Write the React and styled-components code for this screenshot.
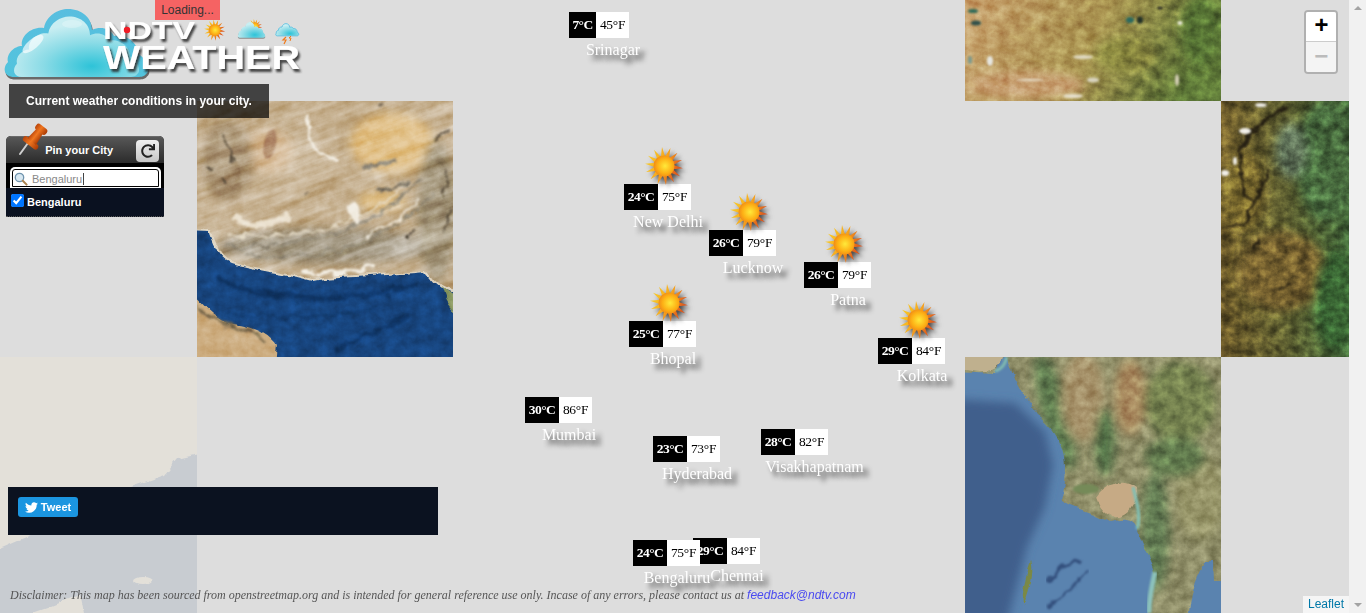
import React from 'react'
import styled, { createGlobalStyle } from 'styled-components'
import { FaTwitter, FaRedo } from 'react-icons/fa'

const GlobalStyle = createGlobalStyle`
  html, body {
    margin: 0;
    padding: 0;
    height: 100%;
    overflow: hidden;
  }

  #root {
    height: 100%;
  }
`

const Page = styled.div`
  display: flex;
  width: 100%;
  height: 613px;
  font-family: "Liberation Sans", Arial, sans-serif;
`

const MapArea = styled.main`
  position: relative;
  flex: 1;
  overflow: hidden;
  background-color: #dddddd;
`

const ScrollTrack = styled.div`
  width: 17px;
  display: flex;
  flex-direction: column;
  align-items: center;
  justify-content: space-between;
  padding: 6px 0;
  box-sizing: border-box;
  background-color: #f1f1f1;
`

const ScrollArrow = styled.span`
  width: 0;
  height: 0;
  border-left: 4px solid transparent;
  border-right: 4px solid transparent;
  border-bottom: ${({ $down }) => ($down ? 'none' : '4px solid #a3a3a3')};
  border-top: ${({ $down }) => ($down ? '4px solid #a3a3a3' : 'none')};
`

const TileBox = styled.svg`
  position: absolute;
  display: block;
  left: ${({ $x }) => $x}px;
  top: ${({ $y }) => $y}px;
  opacity: ${({ $fade }) => $fade || 1};
`

const HiddenDefs = styled.svg`
  position: absolute;
  width: 0;
  height: 0;
`

const Marker = styled.div`
  position: absolute;
  left: ${({ $x }) => $x}px;
  top: ${({ $y }) => $y}px;
  width: 88px;
  display: flex;
  flex-direction: column;
  align-items: center;
  font-family: "Liberation Serif", "Times New Roman", serif;
`

const SunSpot = styled.svg`
  position: absolute;
  left: 21px;
  top: -37px;
  width: 38px;
  height: 38px;
  filter: drop-shadow(3px 3px 2px rgba(30, 30, 30, 0.75));
`

const TempRow = styled.div`
  align-self: flex-start;
  display: flex;
  height: 26px;
  font-size: 13.5px;
  line-height: 26px;
  white-space: nowrap;
`

const TempC = styled.span`
  width: ${({ $narrow }) => ($narrow ? 27 : 34)}px;
  text-align: center;
  font-weight: 700;
  letter-spacing: -0.6px;
  color: #ffffff;
  background-color: #000000;
`

const TempF = styled.span`
  width: 33px;
  text-align: center;
  letter-spacing: -0.3px;
  color: #000000;
  background-color: #ffffff;
`

const CityName = styled.div`
  margin-top: 3px;
  margin-left: ${({ $nudge }) => $nudge || 0}px;
  font-size: 16px;
  line-height: 18px;
  white-space: nowrap;
  color: #ffffff;
  text-shadow: 5px 5px 5px #333333;
`

const ZoomControl = styled.div`
  position: absolute;
  top: 10px;
  right: 11px;
  display: flex;
  flex-direction: column;
  border: 2px solid rgba(0, 0, 0, 0.2);
  border-radius: 4px;
  background-clip: padding-box;
`

const ZoomButton = styled.a`
  width: 30px;
  height: 30px;
  padding-left: 1px;
  box-sizing: border-box;
  display: flex;
  align-items: center;
  justify-content: center;
  font-family: "Liberation Mono", monospace;
  font-size: 24px;
  font-weight: 700;
  color: ${({ $disabled }) => ($disabled ? '#bbbbbb' : '#000000')};
  background-color: ${({ $disabled }) => ($disabled ? '#f4f4f4' : '#ffffff')};
  border-bottom: ${({ $disabled }) => ($disabled ? 'none' : '1px solid #cccccc')};
  border-radius: ${({ $disabled }) => ($disabled ? '0 0 2px 2px' : '2px 2px 0 0')};
`

const Attribution = styled.div`
  position: absolute;
  right: 0;
  bottom: 0;
  padding: 0 5px;
  font-size: 12px;
  line-height: 17px;
  background-color: rgba(255, 255, 255, 0.7);

  a {
    color: #0078a8;
  }
`

const Overlay = styled.div`
  position: absolute;
  top: 0;
  left: 0;
  bottom: 0;
  display: flex;
  flex-direction: column;
  align-items: flex-start;
`

const Loading = styled.div`
  position: absolute;
  top: 0;
  left: 155px;
  width: 65px;
  height: 20px;
  font-size: 12px;
  line-height: 20px;
  text-align: center;
  color: #333333;
  background-color: #f56363;
`

const LogoArt = styled.svg`
  display: block;
  flex: none;
`

const TitleBar = styled.h1`
  width: 260px;
  height: 34px;
  margin: 0 0 18px 9px;
  font-size: 12px;
  font-weight: 700;
  line-height: 34px;
  text-align: center;
  color: #ffffff;
  background-color: rgba(0, 0, 0, 0.7);
`

const PinPanel = styled.section`
  position: relative;
  width: 158px;
  margin-left: 6px;
  background-color: #000000;
  border-radius: 5px 5px 0 0;
`

const PinHead = styled.header`
  height: 26px;
  display: flex;
  align-items: center;
  justify-content: flex-end;
  gap: 23px;
  padding-right: 5px;
  font-size: 11px;
  font-weight: 700;
  color: #ffffff;
  border-radius: 5px 5px 0 0;
  border-top: 1px solid #6a6a6a;
  background: linear-gradient(#575757, #2b2b2b);
`

const PinArt = styled.svg`
  position: absolute;
  left: 6px;
  top: -14px;
`

const RefreshButton = styled.button`
  width: 23px;
  height: 22px;
  margin-top: 2px;
  padding: 0;
  display: flex;
  align-items: center;
  justify-content: center;
  color: #222222;
  border: none;
  border-radius: 4px;
  background: linear-gradient(#f0f0f0, #c6c6c6);
`

const SearchWrap = styled.div`
  padding: 5px 4px 0 5px;
`

const SearchField = styled.div`
  height: 19px;
  display: flex;
  align-items: center;
  gap: 4px;
  padding-left: 2px;
  font-size: 11px;
  color: #888888;
  background-color: #ffffff;
  border: 1px solid #ffffff;
  border-bottom: none;
  border-radius: 4px 4px 0 0;
  outline: 1px solid #000000;
  outline-offset: -2px;
  box-shadow: 0 0 0 1px #ffffff;
`

const SearchText = styled.span`
  padding-right: 1px;
  border-right: 1px solid #444444;
`

const CityList = styled.ul`
  margin: 0;
  padding: 6px 0 0 5px;
  height: 22px;
  list-style: none;
  background-color: #0a1120;
  border-bottom: 1px dotted #555555;
`

const CityItem = styled.li`
  display: flex;
  align-items: flex-start;
  gap: 3px;
  font-size: 11px;
  font-weight: 700;
  line-height: 17px;
  color: #ffffff;

  input {
    width: 13px;
    height: 13px;
    margin: 0;
  }
`

const TweetBar = styled.div`
  width: 410px;
  height: 28px;
  margin: auto 0 0 8px;
  padding: 10px;
  background-color: #0b1220;
`

const TweetButton = styled.a`
  width: 60px;
  height: 20px;
  display: flex;
  align-items: center;
  justify-content: center;
  gap: 3px;
  font-size: 11px;
  font-weight: 700;
  color: #ffffff;
  border-radius: 3px;
  background-color: #1b95e0;
`

const Disclaimer = styled.p`
  margin: 52px 0 10px 10px;
  font-family: "Liberation Serif", "Times New Roman", serif;
  font-size: 12px;
  font-style: italic;
  line-height: 16px;
  white-space: nowrap;
  color: #555555;

  a {
    font-family: "Liberation Sans", Arial, sans-serif;
    color: #4a4af0;
  }
`

const cities = [
  { name: 'Srinagar', x: 569, y: 12, c: '7', f: '45', narrow: true },
  { name: 'New Delhi', x: 624, y: 184, c: '24', f: '75', sun: true },
  { name: 'Lucknow', x: 709, y: 230, c: '26', f: '79', sun: true },
  { name: 'Patna', x: 804, y: 262, c: '26', f: '79', sun: true },
  { name: 'Bhopal', x: 629, y: 321, c: '25', f: '77', sun: true },
  { name: 'Kolkata', x: 878, y: 338, c: '29', f: '84', sun: true },
  { name: 'Mumbai', x: 525, y: 397, c: '30', f: '86' },
  { name: 'Hyderabad', x: 653, y: 436, c: '23', f: '73' },
  { name: 'Visakhapatnam', x: 761, y: 429, c: '28', f: '82', nudge: 19 },
  { name: 'Chennai', x: 693, y: 538, c: '29', f: '84' },
  { name: 'Bengaluru', x: 633, y: 540, c: '24', f: '75' },
]

const sunSpikes = Array.from({ length: 28 }, (_, i) => {
  const r = i % 2 === 0 ? 19 : 9.5
  const a = (i * Math.PI) / 14 + 0.12
  return `${(19 + r * Math.cos(a)).toFixed(1)},${(19 + r * Math.sin(a)).toFixed(1)}`
}).join(' ')

const cloudPath =
  'M14 77C4 77 2 68 8 62C6 54 14 46 22 46C20 36 32 26 44 28C46 16 58 9 68 9C82 9 92 18 92 30C100 26 110 28 114 36C126 34 138 42 138 54C146 58 152 70 146 74C144 77 140 77 136 77Z'

const NoiseGrade = () => (
  <>
    <feColorMatrix type="saturate" values="0" />
    <feComponentTransfer>
      <feFuncR type="linear" slope="1.7" intercept="-0.35" />
      <feFuncG type="linear" slope="1.7" intercept="-0.35" />
      <feFuncB type="linear" slope="1.7" intercept="-0.35" />
      <feFuncA type="linear" slope="0" intercept="1" />
    </feComponentTransfer>
  </>
)

// shared gradients and map textures
const SharedDefs = () => (
  <HiddenDefs aria-hidden="true">
    <defs>
      <radialGradient id="sunCore" cx="55%" cy="50%" r="55%">
        <stop offset="0%" stopColor="#ffe93a" />
        <stop offset="65%" stopColor="#fdb015" />
        <stop offset="100%" stopColor="#f08a17" />
      </radialGradient>
      <linearGradient id="sunRays" x1="0" y1="0" x2="1" y2="0.4">
        <stop offset="0%" stopColor="#f8d92b" />
        <stop offset="55%" stopColor="#f6a71e" />
        <stop offset="100%" stopColor="#dd531c" />
      </linearGradient>
      <linearGradient id="cloudRim" x1="0" y1="0" x2="0" y2="1">
        <stop offset="0%" stopColor="#58bedf" />
        <stop offset="100%" stopColor="#52c4dd" />
      </linearGradient>
      <radialGradient id="cloudBody" cx="62%" cy="82%" r="70%">
        <stop offset="0%" stopColor="#2ec3d8" />
        <stop offset="55%" stopColor="#8adbe6" />
        <stop offset="100%" stopColor="#c9eef2" />
      </radialGradient>
      <filter id="rough" x="-5%" y="-5%" width="110%" height="110%" colorInterpolationFilters="sRGB">
        <feTurbulence type="fractalNoise" baseFrequency="0.05" numOctaves="4" seed="7" result="n" />
        <feDisplacementMap in="SourceGraphic" in2="n" scale="8" xChannelSelector="R" yChannelSelector="G" />
        <feGaussianBlur stdDeviation="0.6" />
      </filter>
      <filter id="roughSoft" x="-10%" y="-10%" width="120%" height="120%" colorInterpolationFilters="sRGB">
        <feTurbulence type="fractalNoise" baseFrequency="0.08" numOctaves="4" seed="21" result="n" />
        <feDisplacementMap in="SourceGraphic" in2="n" scale="12" xChannelSelector="R" yChannelSelector="G" />
        <feGaussianBlur stdDeviation="0.9" />
      </filter>
      <filter id="grain" x="0" y="0" width="100%" height="100%" colorInterpolationFilters="sRGB">
        <feTurbulence type="fractalNoise" baseFrequency="0.09" numOctaves="5" seed="3" />
        <NoiseGrade />
      </filter>
      <filter id="bands" x="0" y="0" width="100%" height="100%" colorInterpolationFilters="sRGB">
        <feTurbulence type="fractalNoise" baseFrequency="0.012 0.1" numOctaves="4" seed="11" />
        <NoiseGrade />
      </filter>
      <filter id="soft" x="-30%" y="-30%" width="160%" height="160%">
        <feGaussianBlur stdDeviation="5" />
      </filter>
      <filter id="softer" x="-30%" y="-30%" width="160%" height="160%">
        <feGaussianBlur stdDeviation="1.2" />
      </filter>
      <linearGradient id="plateau" x1="0" y1="0" x2="1" y2="0.2">
        <stop offset="0%" stopColor="#c9a06c" />
        <stop offset="55%" stopColor="#a8924f" />
        <stop offset="100%" stopColor="#5f7a38" />
      </linearGradient>
      <linearGradient id="ranges" x1="0" y1="0" x2="1" y2="0">
        <stop offset="0%" stopColor="#6f5c2a" />
        <stop offset="50%" stopColor="#5e5f30" />
        <stop offset="100%" stopColor="#3e6136" />
      </linearGradient>
    </defs>
  </HiddenDefs>
)

const Noise = ({ w, h, kind = 'grain', amount = 0.5, angle = 0 }) => (
  <g transform={`rotate(${angle} ${w / 2} ${h / 2})`}>
    <rect
      x={-w / 2}
      y={-h / 2}
      width={w * 2}
      height={h * 2}
      filter={`url(#${kind})`}
      opacity={amount}
      style={{ mixBlendMode: 'overlay' }}
    />
  </g>
)

// Makran coast and the Arabian Sea
const ArabianTile = () => (
  <TileBox $x={197} $y={101} width="256" height="256" viewBox="0 0 256 256">
    <rect width="256" height="256" fill="#c6b08f" />
    <g filter="url(#soft)">
      <ellipse cx="195" cy="42" rx="42" ry="30" fill="#e3c38c" />
      <ellipse cx="185" cy="100" rx="24" ry="10" fill="#e0bf85" />
      <ellipse cx="72" cy="50" rx="24" ry="22" fill="#d6b994" />
      <ellipse cx="30" cy="60" rx="26" ry="40" fill="#ab9576" />
      <ellipse cx="130" cy="145" rx="110" ry="18" fill="#a59a84" />
      <ellipse cx="240" cy="110" rx="20" ry="70" fill="#a3957a" />
    </g>
    <ellipse cx="73" cy="43" rx="6" ry="15" fill="#b0896b" filter="url(#softer)" transform="rotate(12 73 43)" />
    <Noise w={256} h={256} kind="bands" amount={0.4} angle={-20} />
    <g fill="none" strokeLinecap="round" filter="url(#roughSoft)">
      <path d="M112 15C108 40 120 60 140 58" stroke="#f4efe4" strokeWidth="3" />
      <path d="M40 118C60 128 78 122 88 116" stroke="#ece2d0" strokeWidth="8" />
      <path d="M30 145C90 150 180 130 225 78" stroke="#8f8776" strokeWidth="2" />
      <path d="M30 133C90 138 160 130 205 88" stroke="#e6dcc8" strokeWidth="2" />
      <path d="M50 155C110 160 190 150 236 90" stroke="#928a78" strokeWidth="2" />
      <path d="M170 135C190 128 205 118 220 100" stroke="#efe9dc" strokeWidth="2" />
      <path d="M165 70C175 62 190 62 198 60" stroke="#8a8375" strokeWidth="4" />
      <path d="M180 92C190 86 200 84 212 82" stroke="#6f695d" strokeWidth="3" />
      <path d="M155 108L160 118" stroke="#f2ede2" strokeWidth="9" />
      <path d="M105 168C120 178 150 172 175 166" stroke="#f3eee3" strokeWidth="4" />
      <g stroke="#3a3024" strokeWidth="1.5">
        <path d="M28 35L36 60" />
        <path d="M10 68L14 70" />
        <path d="M26 78L32 80" />
        <path d="M110 90L113 90" />
        <path d="M250 70L246 95" />
        <path d="M252 110L248 130" />
        <path d="M236 40L248 28" />
        <path d="M182 8L188 3" />
        <path d="M218 128L210 138" />
      </g>
    </g>
    <g filter="url(#rough)">
      <path
        d="M-10 127L14 128C18 140 22 154 34 160C60 168 90 170 116 178C135 174 175 174 230 170C238 178 240 186 258 190L262 266L-10 266Z"
        fill="#ddd3c0"
      />
      <path
        d="M-10 129L12 130C16 143 22 157 34 162C60 170 90 172 116 180C135 176 175 176 228 171C236 179 238 189 262 195L262 266L-10 266Z"
        fill="#17457f"
      />
      <path d="M244 186C250 192 256 196 262 198L258 212C250 206 246 196 244 186Z" fill="#8e9c66" />
      <path d="M-10 190C4 200 12 215 30 222C50 225 68 228 80 245L78 266L-10 266Z" fill="#cdad80" />
    </g>
    <g fill="none" stroke="#0f3566" strokeLinecap="round" filter="url(#roughSoft)">
      <path d="M20 178C70 200 150 205 220 182" strokeWidth="6" />
      <path d="M140 250C160 235 190 230 210 215" strokeWidth="5" />
      <path d="M30 212C90 220 150 215 180 205" strokeWidth="3" opacity="0.6" />
    </g>
    <path d="M0 205C10 225 40 220 70 240" stroke="#7a6a4c" strokeWidth="3" fill="none" filter="url(#roughSoft)" />
    <Noise w={256} h={256} amount={0.2} />
  </TileBox>
)

const TibetTile = () => (
  <TileBox $x={965} $y={0} width="256" height="101" viewBox="0 0 256 101">
    <rect width="256" height="101" fill="url(#plateau)" />
    <g filter="url(#soft)">
      <ellipse cx="60" cy="85" rx="60" ry="14" fill="#c79f70" />
      <ellipse cx="160" cy="55" rx="30" ry="18" fill="#86843e" />
      <ellipse cx="236" cy="30" rx="20" ry="35" fill="#587636" />
    </g>
    <Noise w={256} h={101} kind="bands" amount={0.15} angle={15} />
    <Noise w={256} h={101} amount={0.35} />
    <g filter="url(#softer)">
      <ellipse cx="8" cy="11" rx="5" ry="2" fill="#2f6a58" />
      <ellipse cx="11" cy="23" rx="5" ry="2.5" fill="#2f4f48" />
      <ellipse cx="165" cy="20" rx="4" ry="3" fill="#2c6a5e" />
      <ellipse cx="175" cy="20" rx="3" ry="3.5" fill="#223328" />
      <ellipse cx="25" cy="61" rx="3" ry="5" fill="#e6e6e0" />
      <ellipse cx="5" cy="60" rx="2" ry="4" fill="#7a9a90" />
      <ellipse cx="195" cy="8" rx="3" ry="1.5" fill="#2a2a20" />
      <ellipse cx="215" cy="23" rx="2.5" ry="2" fill="#e8e6da" />
      <ellipse cx="108" cy="96" rx="10" ry="2" fill="#e6dfcc" />
      <ellipse cx="118" cy="57" rx="10" ry="2" fill="#dfd8c0" />
      <ellipse cx="128" cy="80" rx="6" ry="2.5" fill="#d9d4c0" />
      <ellipse cx="65" cy="80" rx="14" ry="1.2" fill="#e4dac4" />
      <ellipse cx="212" cy="80" rx="2" ry="6" fill="#d4cfb5" />
    </g>
  </TileBox>
)

const RangesTile = () => (
  <TileBox $x={1221} $y={101} width="128" height="256" viewBox="0 0 128 256">
    <rect width="128" height="256" fill="url(#ranges)" />
    <g filter="url(#soft)">
      <ellipse cx="22" cy="90" rx="22" ry="40" fill="#7d6c2e" />
      <ellipse cx="60" cy="170" rx="45" ry="40" fill="#75602f" />
      <ellipse cx="105" cy="60" rx="30" ry="60" fill="#466a3c" />
      <ellipse cx="115" cy="200" rx="22" ry="50" fill="#376333" />
      <ellipse cx="70" cy="50" rx="16" ry="28" fill="#5e7258" />
    </g>
    <Noise w={128} h={256} amount={0.35} />
    <g fill="none" stroke="#241e12" strokeLinecap="round" filter="url(#roughSoft)">
      <path d="M64 8C50 18 30 24 18 50" strokeWidth="3" />
      <path d="M48 20C38 28 30 34 22 46" strokeWidth="2" />
      <path d="M18 50C20 70 18 90 30 100" strokeWidth="3" />
      <path d="M48 70C40 90 30 100 24 122" strokeWidth="3" />
      <path d="M0 128C14 125 24 122 34 112" strokeWidth="2" />
      <path d="M38 138L34 150" strokeWidth="3" />
      <path d="M50 190L70 185" strokeWidth="1.5" />
      <path d="M0 195C20 225 40 235 60 250" strokeWidth="1.2" opacity="0.6" />
    </g>
    <g fill="#f2f0ea" filter="url(#softer)">
      <ellipse cx="24" cy="30" rx="6" ry="3" />
      <ellipse cx="14" cy="60" rx="2" ry="4" />
      <ellipse cx="4" cy="72" rx="4" ry="3" />
      <ellipse cx="40" cy="4" rx="6" ry="2" />
    </g>
    <Noise w={128} h={256} amount={0.2} />
  </TileBox>
)

// Myanmar and the Andaman Sea
const MyanmarTile = () => (
  <TileBox $x={965} $y={357} width="256" height="256" viewBox="0 0 256 256">
    <rect width="256" height="256" fill="#8f8e68" />
    <g filter="url(#soft)">
      <ellipse cx="90" cy="55" rx="14" ry="60" fill="#5f7c50" transform="rotate(-15 90 55)" />
      <ellipse cx="118" cy="40" rx="22" ry="45" fill="#a8946c" />
      <ellipse cx="140" cy="85" rx="10" ry="35" fill="#547548" />
      <ellipse cx="165" cy="40" rx="16" ry="38" fill="#a98a5e" />
      <ellipse cx="215" cy="45" rx="36" ry="40" fill="#74824f" />
      <ellipse cx="190" cy="175" rx="14" ry="60" fill="#657f54" />
      <ellipse cx="235" cy="140" rx="24" ry="42" fill="#969468" />
      <ellipse cx="210" cy="100" rx="30" ry="20" fill="#647d50" />
    </g>
    <Noise w={256} h={256} amount={0.3} />
    <ellipse cx="121" cy="132" rx="13" ry="5" fill="#748a58" filter="url(#softer)" />
    <g filter="url(#rough)">
      <path
        d="M-10 14L30 16L42 -6L42 0C50 25 60 40 72 58C90 70 100 90 100 110C100 125 96 135 98 144C110 152 128 155 145 165C155 162 168 160 172 172C178 190 188 205 190 215C188 232 184 245 182 266L225 266C222 250 226 232 240 206L248 206L249 222L266 222L266 266L-10 266Z"
        fill="#5a83af"
      />
      <path d="M-10 -6L38 -6C40 6 32 14 20 14C10 14 0 12 -10 10Z" fill="#bfb08e" />
      <path d="M130 140C140 125 160 120 172 130C172 150 160 162 148 160C140 158 134 152 130 140Z" fill="#c6aa85" />
      <path d="M66 205C70 215 64 235 58 250C56 235 62 215 66 205Z" fill="#7c8a45" />
    </g>
    <path d="M-10 42L50 46L80 75L88 108L80 150L62 190L42 266L-10 266Z" fill="#405f8c" filter="url(#soft)" />
    <g fill="none" stroke="#334f7c" strokeLinecap="round" filter="url(#roughSoft)">
      <path d="M85 225C95 210 105 200 115 205" strokeWidth="4" />
      <path d="M85 250C100 235 110 230 120 215" strokeWidth="3" />
    </g>
    <path d="M168 130C172 145 176 160 172 172" stroke="#7fc0b5" strokeWidth="3" fill="none" filter="url(#softer)" />
    <path d="M190 215C186 232 184 245 184 256" stroke="#8cc2bb" strokeWidth="5" fill="none" filter="url(#softer)" />
    <path d="M30 14C38 12 40 6 42 0" stroke="#82bdb0" strokeWidth="3" fill="none" filter="url(#softer)" />
  </TileBox>
)

// still fading in when the picture was taken
const FadedTile = () => (
  <TileBox $x={0} $y={357} $fade={0.3} width="197" height="256" viewBox="0 0 197 256">
    <rect width="197" height="256" fill="#f1e7d3" />
    <g filter="url(#rough)">
      <path d="M205 96L178 102L165 118L130 130L100 145L33 178L-6 195L-6 262L205 262Z" fill="#9aa8b8" />
      <path d="M15 262L50 250L80 238L85 262Z" fill="#f1e7d3" />
      <ellipse cx="143" cy="224" rx="9" ry="4" fill="#f1e7d3" />
    </g>
  </TileBox>
)

const Sun = () => (
  <SunSpot viewBox="0 0 38 38" aria-hidden="true">
    <polygon points={sunSpikes} fill="url(#sunRays)" />
    <circle cx="19" cy="19" r="10.5" fill="url(#sunCore)" />
  </SunSpot>
)

const Logo = () => (
  <LogoArt width="305" height="84" viewBox="0 0 305 84">
    <defs>
      <filter id="logoShadow" x="-5%" y="-20%" width="110%" height="150%">
        <feDropShadow dx="2" dy="3" stdDeviation="0.8" floodColor="#2b2b2b" floodOpacity="0.85" />
      </filter>
    </defs>
    <path d={cloudPath} transform="translate(1 2.5)" fill="#555555" opacity="0.85" />
    <path d={cloudPath} fill="url(#cloudRim)" />
    <path d={cloudPath} transform="translate(10 8.5) scale(0.87 0.89)" fill="url(#cloudBody)" />
    <ellipse cx="33" cy="44" rx="13" ry="5" fill="#ffffff" opacity="0.65" transform="rotate(-40 33 44)" />
    <ellipse cx="72" cy="24" rx="10" ry="4" fill="#ffffff" opacity="0.25" />
    <g
      fontFamily="'Liberation Sans', Arial, sans-serif"
      fontWeight="700"
      fill="#ffffff"
      filter="url(#logoShadow)"
    >
      <text x="103" y="39" fontSize="24" textLength="92" lengthAdjust="spacingAndGlyphs">NDTV</text>
      <text x="103" y="69" fontSize="33" textLength="197" lengthAdjust="spacingAndGlyphs">WEATHER</text>
    </g>
    <circle cx="127" cy="30" r="3.2" fill="#ef1c25" />
    <g transform="translate(204 19.5) scale(0.56)">
      <polygon points={sunSpikes} fill="url(#sunRays)" />
      <circle cx="19" cy="19" r="10.5" fill="url(#sunCore)" />
    </g>
    <g transform="translate(247 19) scale(0.4)">
      <polygon points={sunSpikes} fill="url(#sunRays)" />
      <circle cx="19" cy="19" r="10.5" fill="url(#sunCore)" />
    </g>
    <path d={cloudPath} transform="translate(237 21) scale(0.19 0.23)" fill="#555555" opacity="0.6" />
    <path d={cloudPath} transform="translate(237 20) scale(0.19 0.23)" fill="url(#cloudBody)" />
    <path d={cloudPath} transform="translate(275 22) scale(0.16 0.18)" fill="url(#cloudBody)" stroke="#58bedf" strokeWidth="5" />
    <path d="M286 37L283 40L286 40L284 44" fill="none" stroke="#ef7a1c" strokeWidth="1.2" />
    <path d="M291 36L289 38L291 38L290 41" fill="none" stroke="#ef7a1c" strokeWidth="1" />
  </LogoArt>
)

const PinIcon = () => (
  <PinArt width="38" height="36" viewBox="0 0 38 36" aria-hidden="true">
    <defs>
      <linearGradient id="pinBody" x1="0" y1="0" x2="1" y2="0">
        <stop offset="0%" stopColor="#b8440a" />
        <stop offset="45%" stopColor="#f0761f" />
        <stop offset="100%" stopColor="#a83a05" />
      </linearGradient>
    </defs>
    <path d="M8 32L16 21" stroke="#cfcfcf" strokeWidth="2" strokeLinecap="round" />
    <g transform="rotate(38 24 14)">
      <rect x="15" y="20" width="18" height="5.5" rx="2.7" fill="url(#pinBody)" />
      <path d="M18.5 21L20 8H28L29.5 21Z" fill="url(#pinBody)" />
      <rect x="17.5" y="2" width="13" height="7" rx="3" fill="url(#pinBody)" />
    </g>
  </PinArt>
)

const SearchGlyph = () => (
  <svg width="14" height="14" viewBox="0 0 14 14" aria-hidden="true">
    <circle cx="5.5" cy="5.5" r="4.2" fill="#d8e8f2" stroke="#6f93ad" strokeWidth="1.3" />
    <path d="M8.8 8.8L12.6 12.6" stroke="#a9814f" strokeWidth="2" strokeLinecap="round" />
  </svg>
)

const App = () => {
  return (
    <Page>
      <GlobalStyle />
      <SharedDefs />
      <MapArea>
        <FadedTile />
        <ArabianTile />
        <TibetTile />
        <RangesTile />
        <MyanmarTile />

        {cities.map((city) => (
          <Marker key={city.name} $x={city.x} $y={city.y}>
            {city.sun && <Sun />}
            <TempRow>
              <TempC $narrow={city.narrow}>{city.c}°C</TempC>
              <TempF>{city.f}°F</TempF>
            </TempRow>
            <CityName $nudge={city.nudge}>{city.name}</CityName>
          </Marker>
        ))}

        <ZoomControl>
          <ZoomButton>+</ZoomButton>
          <ZoomButton $disabled>−</ZoomButton>
        </ZoomControl>
        <Attribution>
          <a>Leaflet</a>
        </Attribution>

        <Overlay>
          <Loading>Loading...</Loading>
          <Logo />
          <TitleBar>Current weather conditions in your city.</TitleBar>
          <PinPanel>
            <PinIcon />
            <PinHead>
              <span>Pin your City</span>
              <RefreshButton aria-label="Reset">
                <FaRedo size={14} />
              </RefreshButton>
            </PinHead>
            <SearchWrap>
              <SearchField>
                <SearchGlyph />
                <SearchText>Bengaluru</SearchText>
              </SearchField>
            </SearchWrap>
            <CityList>
              <CityItem>
                <input type="checkbox" defaultChecked />
                Bengaluru
              </CityItem>
            </CityList>
          </PinPanel>
          <TweetBar>
            <TweetButton>
              <FaTwitter size={13} />
              Tweet
            </TweetButton>
          </TweetBar>
          <Disclaimer>
            Disclaimer: This map has been sourced from openstreetmap.org and is intended for general
            reference use only. Incase of any errors, please contact us at <a>feedback@ndtv.com</a>
          </Disclaimer>
        </Overlay>
      </MapArea>
      <ScrollTrack>
        <ScrollArrow />
        <ScrollArrow $down />
      </ScrollTrack>
    </Page>
  )
}

export default App
